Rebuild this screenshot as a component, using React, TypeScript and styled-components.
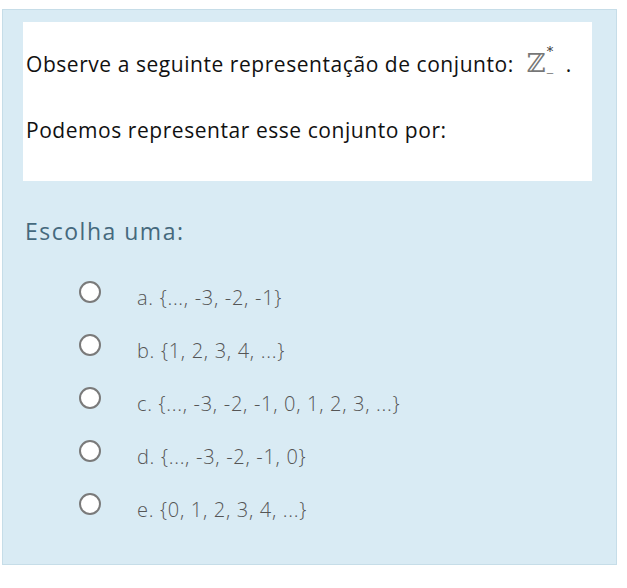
import styled, { createGlobalStyle } from "styled-components";

const GlobalStyle = createGlobalStyle`
  html, body {
    margin: 0;
    padding: 0;
    background: #ffffff;
  }
`;

const Page = styled.main`
  width: 627px;
  height: 588px;
  padding: 9px 10px 0 2px;
  box-sizing: border-box;
`;

const Panel = styled.section`
  background: #d9ebf4;
  border: 1px solid #c6dde8;
  height: 556px;
  box-sizing: border-box;
  padding: 12px 24px 0 20px;
`;

const QuestionBox = styled.div`
  background: #ffffff;
  height: 159px;
  padding: 27px 0 0 3px;
  box-sizing: border-box;
  font-family: "Open Sans", "Liberation Sans", sans-serif;
  font-size: 21px;
  color: #111;
  letter-spacing: 0.55px;
`;

const Line = styled.p`
  margin: 0 0 36px;
  line-height: 30px;
`;

const SetZ = styled.span`
  display: inline-block;
  position: relative;
  font-family: "DejaVu Serif", serif;
  font-size: 26px;
  line-height: 26px;
  color: #777;
  margin-left: 13px;
  width: 39px;
  letter-spacing: 0;
`;

const Script = styled.span<{ $top: number }>`
  position: absolute;
  left: 20px;
  top: ${(p) => p.$top}px;
  font-size: 13px;
  line-height: 13px;
  color: #333;
`;

const Prompt = styled.h2`
  margin: 35px 0 0 2px;
  line-height: 30px;
  font-family: "Open Sans", "Liberation Sans", sans-serif;
  font-weight: 400;
  font-size: 23px;
  letter-spacing: 1.5px;
  color: #45697d;
`;

const Options = styled.ul`
  list-style: none;
  margin: 35px 0 0;
  padding: 0 0 0 56px;
`;

const Option = styled.li`
  display: flex;
  align-items: flex-start;
  height: 53px;
  font-family: "Open Sans", "Liberation Sans", sans-serif;
  font-weight: 300;
  font-size: 20px;
  letter-spacing: 0.7px;
  line-height: 24px;
  color: #555;
`;

const Radio = styled.span`
  width: 22px;
  height: 22px;
  box-sizing: border-box;
  border-radius: 50%;
  border: 2px solid #7a7a7a;
  background: #fff;
  margin-right: 36px;
  flex-shrink: 0;
`;

const Label = styled.span`
  padding-top: 5px;
`;

const options = [
  "a. {..., -3, -2, -1}",
  "b. {1, 2, 3, 4, ...}",
  "c. {..., -3, -2, -1, 0, 1, 2, 3, ...}",
  "d. {..., -3, -2, -1, 0}",
  "e. {0, 1, 2, 3, 4, ...}",
];

export default function App() {
  return (
    <Page>
      <GlobalStyle />
      <Panel>
        <QuestionBox>
          <Line>
            Observe a seguinte representação de conjunto:
            <SetZ>
              ℤ<Script $top={-5}>*</Script>
              <Script $top={10}>_</Script>
            </SetZ>
            .
          </Line>
          <Line>Podemos representar esse conjunto por:</Line>
        </QuestionBox>
        <Prompt>Escolha uma:</Prompt>
        <Options>
          {options.map((o) => (
            <Option key={o}>
              <Radio />
              <Label>{o}</Label>
            </Option>
          ))}
        </Options>
      </Panel>
    </Page>
  );
}
